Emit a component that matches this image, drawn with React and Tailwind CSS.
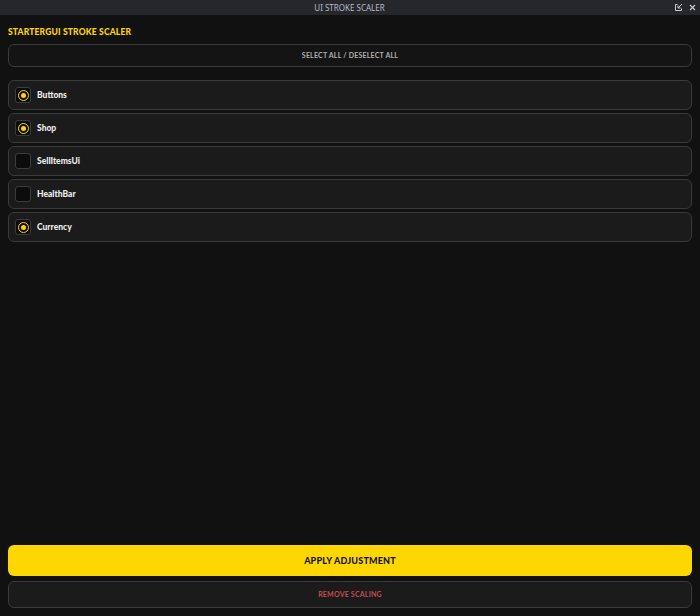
import React from "react";

const items = [
  { name: "Buttons", on: true },
  { name: "Shop", on: true },
  { name: "SellItemsUi", on: false },
  { name: "HealthBar", on: false },
  { name: "Currency", on: true },
];

function Check({ on }) {
  return (
    <div className="w-[16px] h-[16px] rounded-[3px] bg-[#0c0c0c] border border-[#3c3c3c] flex items-center justify-center">
      {on && (
        <div className="w-[11px] h-[11px] rounded-full border-[1.5px] border-[#ffd400] flex items-center justify-center">
          <div className="w-[5px] h-[5px] rounded-full bg-[#ffd400]" />
        </div>
      )}
    </div>
  );
}

export default function App() {
  return (
    <div
      className="w-[700px] h-[616px] bg-[#111111] flex flex-col overflow-hidden"
      style={{ fontFamily: "Lato, 'Open Sans', sans-serif" }}
    >
      <div className="h-[15px] bg-[#25272c] flex items-center relative shrink-0">
        <div className="flex-1 text-center text-[8px] text-[#b8bcc4] leading-none pr-[1px]" style={{ fontFamily: "'Noto Sans', sans-serif" }}>
          UI STROKE SCALER
        </div>
        <div className="absolute right-[4px] top-0 h-[15px] flex items-center gap-[6px] text-[#c8ccd2]">
          <svg width="9" height="9" viewBox="0 0 9 9" fill="none" stroke="currentColor" strokeWidth="1">
            <path d="M3.5 1.5H1.5V7.5H7.5V5.5" />
            <path d="M8 1L4 5M4 2.5V5H6.5" />
          </svg>
          <svg width="7" height="7" viewBox="0 0 7 7" stroke="currentColor" strokeWidth="1.1">
            <path d="M1 1L6 6M6 1L1 6" />
          </svg>
        </div>
      </div>
      <div className="flex-1 flex flex-col px-[8px] pt-[11px] pb-[8px]">
        <div className="text-[8.5px] font-black text-[#ffd400] tracking-[0.02em] leading-[12px] h-[12px]">
          STARTERGUI STROKE SCALER
        </div>
        <div className="mt-[6px] h-[23px] rounded-[6px] border border-[#3a3a3a] bg-[#141414] flex items-center justify-center text-[7px] font-bold text-[#b0b0b0] tracking-[0.03em]">
          SELECT ALL / DESELECT ALL
        </div>
        <div className="mt-[13px] flex flex-col gap-[3px]">
          {items.map((it) => (
            <div
              key={it.name}
              className="h-[30px] rounded-[6px] border border-[#3a3a3a] bg-[#1b1b1b] flex items-center pl-[6px] gap-[6px]"
            >
              <Check on={it.on} />
              <span className="text-[8.5px] font-black text-[#ececec]">{it.name}</span>
            </div>
          ))}
        </div>
        <div className="flex-1" />
        <div className="h-[31px] rounded-[6px] bg-[#ffd700] flex items-center justify-center text-[9px] font-black text-[#141414] tracking-[0.02em]">
          APPLY ADJUSTMENT
        </div>
        <div className="mt-[5px] h-[27px] rounded-[6px] border border-[#3a3a3a] bg-[#1b1b1b] flex items-center justify-center text-[7px] font-bold text-[#c24d4d] tracking-[0.03em]">
          REMOVE SCALING
        </div>
      </div>
    </div>
  );
}
